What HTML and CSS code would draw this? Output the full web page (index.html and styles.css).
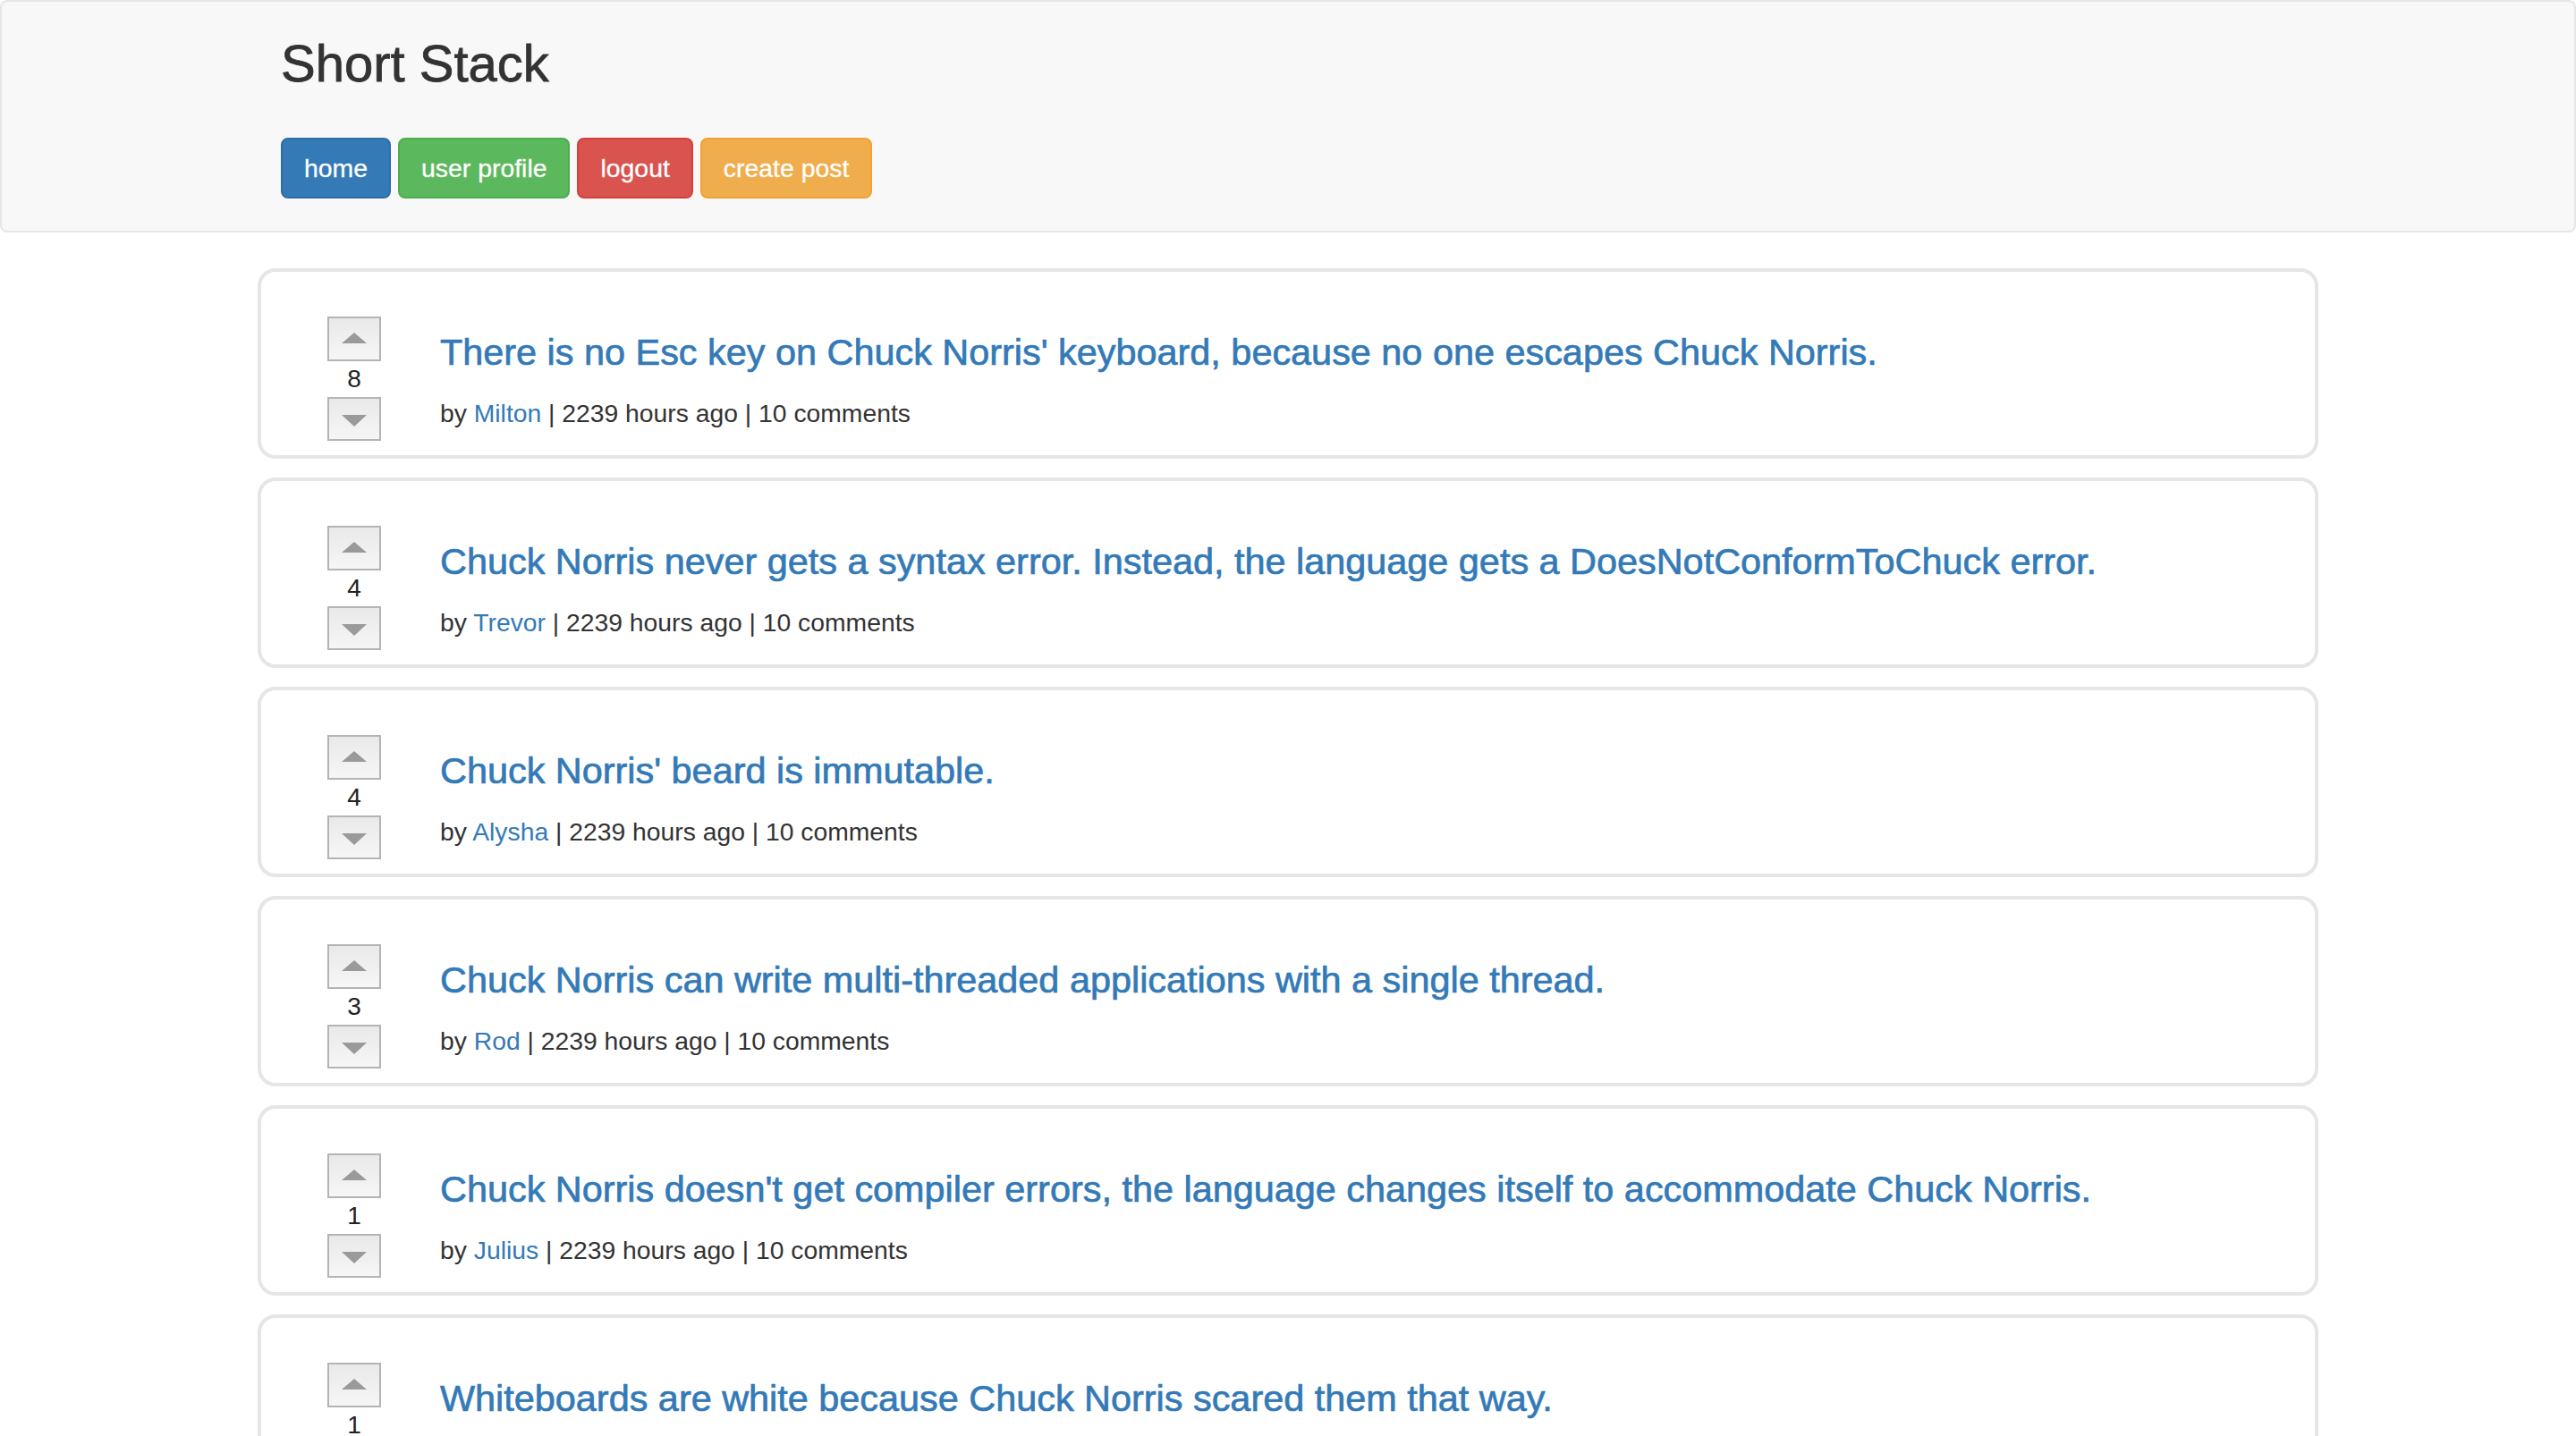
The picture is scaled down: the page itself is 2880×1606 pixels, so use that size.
FILE: index.html
```html
<!DOCTYPE html>
<html lang="en">
<head>
<meta charset="utf-8">
<title>Short Stack</title>
<link rel="stylesheet" href="styles.css">
</head>
<body>
<header class="navbar">
  <div class="container header-inner">
    <h1 class="brand">Short Stack</h1>
    <nav class="nav-buttons">
      <a class="btn btn-primary" href="#">home</a>
      <a class="btn btn-success" href="#">user profile</a>
      <a class="btn btn-danger" href="#">logout</a>
      <a class="btn btn-warning" href="#">create post</a>
    </nav>
  </div>
</header>
<main class="container posts">
  <article class="post">
    <div class="vote">
      <button class="vote-btn up" aria-label="upvote"><span class="tri tri-up"></span></button>
      <div class="score">8</div>
      <button class="vote-btn down" aria-label="downvote"><span class="tri tri-down"></span></button>
    </div>
    <div class="post-body">
      <h4 class="post-title"><a href="#">There is no Esc key on Chuck Norris' keyboard, because no one escapes Chuck Norris.</a></h4>
      <p class="meta">by <a href="#">Milton</a> | 2239 hours ago | 10 comments</p>
    </div>
  </article>
  <article class="post">
    <div class="vote">
      <button class="vote-btn up" aria-label="upvote"><span class="tri tri-up"></span></button>
      <div class="score">4</div>
      <button class="vote-btn down" aria-label="downvote"><span class="tri tri-down"></span></button>
    </div>
    <div class="post-body">
      <h4 class="post-title"><a href="#">Chuck Norris never gets a syntax error. Instead, the language gets a DoesNotConformToChuck error.</a></h4>
      <p class="meta">by <a href="#">Trevor</a> | 2239 hours ago | 10 comments</p>
    </div>
  </article>
  <article class="post">
    <div class="vote">
      <button class="vote-btn up" aria-label="upvote"><span class="tri tri-up"></span></button>
      <div class="score">4</div>
      <button class="vote-btn down" aria-label="downvote"><span class="tri tri-down"></span></button>
    </div>
    <div class="post-body">
      <h4 class="post-title"><a href="#">Chuck Norris' beard is immutable.</a></h4>
      <p class="meta">by <a href="#">Alysha</a> | 2239 hours ago | 10 comments</p>
    </div>
  </article>
  <article class="post">
    <div class="vote">
      <button class="vote-btn up" aria-label="upvote"><span class="tri tri-up"></span></button>
      <div class="score">3</div>
      <button class="vote-btn down" aria-label="downvote"><span class="tri tri-down"></span></button>
    </div>
    <div class="post-body">
      <h4 class="post-title"><a href="#">Chuck Norris can write multi-threaded applications with a single thread.</a></h4>
      <p class="meta">by <a href="#">Rod</a> | 2239 hours ago | 10 comments</p>
    </div>
  </article>
  <article class="post">
    <div class="vote">
      <button class="vote-btn up" aria-label="upvote"><span class="tri tri-up"></span></button>
      <div class="score">1</div>
      <button class="vote-btn down" aria-label="downvote"><span class="tri tri-down"></span></button>
    </div>
    <div class="post-body">
      <h4 class="post-title"><a href="#">Chuck Norris doesn't get compiler errors, the language changes itself to accommodate Chuck Norris.</a></h4>
      <p class="meta">by <a href="#">Julius</a> | 2239 hours ago | 10 comments</p>
    </div>
  </article>
  <article class="post">
    <div class="vote">
      <button class="vote-btn up" aria-label="upvote"><span class="tri tri-up"></span></button>
      <div class="score">1</div>
      <button class="vote-btn down" aria-label="downvote"><span class="tri tri-down"></span></button>
    </div>
    <div class="post-body">
      <h4 class="post-title"><a href="#">Whiteboards are white because Chuck Norris scared them that way.</a></h4>
      <p class="meta">by <a href="#">Casey</a> | 2239 hours ago | 10 comments</p>
    </div>
  </article>
</main>
</body>
</html>
```
FILE: styles.css
```css
html, body {
  margin: 0;
  padding: 0;
  background: #fff;
}

body {
  font-family: "Liberation Sans", Arial, Helvetica, sans-serif;
  font-size: 28px;
  line-height: 40px;
  color: #333;
}

a {
  color: #337ab7;
  text-decoration: none;
}

.container {
  width: 2304px;
  margin: 0 auto;
  box-sizing: border-box;
}

/* Header */
.navbar {
  background: #f8f8f8;
  border: 2px solid #e7e7e7;
  border-radius: 8px;
  height: 260px;
  box-sizing: border-box;
}

.header-inner {
  padding-left: 26px;
  padding-top: 37px;
}

.brand {
  margin: 0;
  font-size: 58px;
  line-height: 64px;
  font-weight: 400;
  color: #333;
  -webkit-text-stroke: 0.8px #333;
}

.nav-buttons {
  display: flex;
  gap: 8px;
  margin-top: 51px;
}

.btn {
  display: inline-block;
  padding: 12px 24px;
  font-size: 28.4px;
  line-height: 40px;
  color: #fff;
  border: 2px solid transparent;
  border-radius: 8px;
  white-space: nowrap;
  -webkit-text-stroke: 0.3px #fff;
}

.btn-primary { background: #337ab7; border-color: #2e6da4; }
.btn-success { background: #5cb85c; border-color: #4cae4c; }
.btn-danger  { background: #d9534f; border-color: #d43f3a; }
.btn-warning { background: #f0ad4e; border-color: #eea236; }

/* Posts */
.posts {
  padding-top: 40px;
  display: flex;
  flex-direction: column;
  gap: 21px;
}

.post {
  display: flex;
  align-items: flex-start;
  height: 213px;
  box-sizing: border-box;
  border: 4px solid #e6e6e6;
  border-radius: 20px;
  padding: 50px 0 16px 74px;
}

.vote {
  width: 60px;
  display: flex;
  flex-direction: column;
  align-items: center;
  flex: none;
}

.vote-btn {
  width: 60px;
  height: 50px;
  margin: 0;
  padding: 0;
  box-sizing: border-box;
  border: 2px solid #b4b4b4;
  background: linear-gradient(#e9e9e9, #f6f6f6);
  display: flex;
  align-items: center;
  justify-content: center;
}

.vote-btn.down {
  height: 49px;
}

.tri {
  width: 0;
  height: 0;
  border-left: 14px solid transparent;
  border-right: 14px solid transparent;
}

.tri-up {
  border-bottom: 12px solid #9a9a9a;
  margin-top: -2px;
}

.tri-down {
  border-top: 13px solid #9a9a9a;
  margin-top: 4px;
}

.score {
  font-size: 28px;
  line-height: 40px;
  color: #222;
  text-align: center;
}

.post-body {
  margin-left: 66px;
  padding-top: 18px;
}

.post-title {
  margin: 0;
  font-size: 41.4px;
  line-height: 45px;
  font-weight: 400;
  -webkit-text-stroke: 0.7px #337ab7;
}

.meta {
  margin: 25px 0 0;
  font-size: 28.3px;
  line-height: 40px;
  color: #333;
}
```
